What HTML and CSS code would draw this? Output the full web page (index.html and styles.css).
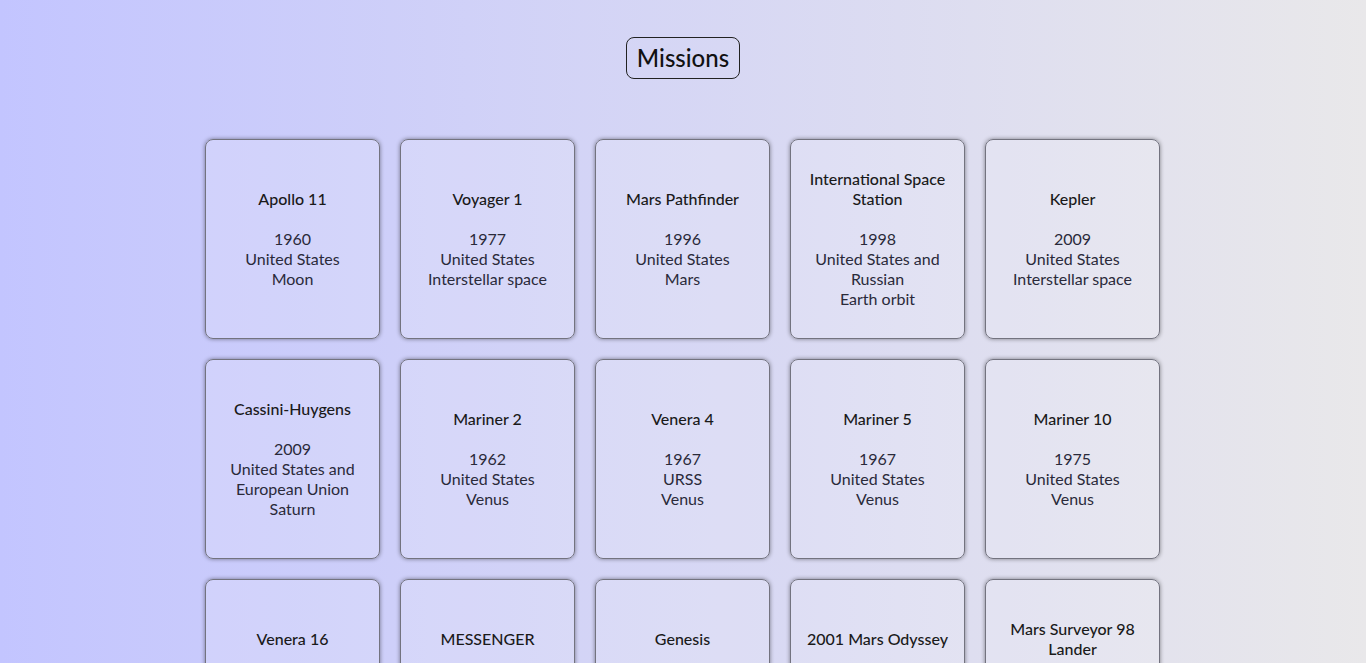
FILE: index.html
```html
<!DOCTYPE html>
<html lang="en">
<head>
<meta charset="utf-8">
<title>Missions</title>
<link rel="stylesheet" href="styles.css">
</head>
<body>
<header class="header"><h1 class="title">Missions</h1></header>
<main class="grid">
  <div class="card"><div class="name">Apollo 11</div><div class="info">1960<br>United States<br>Moon</div></div>
  <div class="card"><div class="name">Voyager 1</div><div class="info">1977<br>United States<br>Interstellar space</div></div>
  <div class="card"><div class="name">Mars Pathfinder</div><div class="info">1996<br>United States<br>Mars</div></div>
  <div class="card"><div class="name">International Space Station</div><div class="info">1998<br>United States and Russian<br>Earth orbit</div></div>
  <div class="card"><div class="name">Kepler</div><div class="info">2009<br>United States<br>Interstellar space</div></div>
  <div class="card"><div class="name">Cassini-Huygens</div><div class="info">2009<br>United States and European Union<br>Saturn</div></div>
  <div class="card"><div class="name">Mariner 2</div><div class="info">1962<br>United States<br>Venus</div></div>
  <div class="card"><div class="name">Venera 4</div><div class="info">1967<br>URSS<br>Venus</div></div>
  <div class="card"><div class="name">Mariner 5</div><div class="info">1967<br>United States<br>Venus</div></div>
  <div class="card"><div class="name">Mariner 10</div><div class="info">1975<br>United States<br>Venus</div></div>
  <div class="card"><div class="name">Venera 16</div><div class="info">1983<br>URSS<br>Venus</div></div>
  <div class="card"><div class="name">MESSENGER</div><div class="info">2004<br>United States<br>Mercury</div></div>
  <div class="card"><div class="name">Genesis</div><div class="info">2001<br>United States<br>Sun</div></div>
  <div class="card"><div class="name">2001 Mars Odyssey</div><div class="info">2001<br>United States<br>Mars</div></div>
  <div class="card"><div class="name">Mars Surveyor 98 Lander</div><div class="info">1999<br>United States<br>Mars</div></div>
</main>
</body>
</html>
```
FILE: styles.css
```css
html, body {
  margin: 0;
  padding: 0;
}
body {
  min-height: 100vh;
  background: linear-gradient(to right, #c3c5ff 0%, #e9e8ea 100%);
  background-attachment: fixed;
  font-family: "Lato", "Open Sans", sans-serif;
  color: #222;
  font-size: 16px;
  line-height: 20px;
}
.header {
  display: flex;
  justify-content: center;
  padding-top: 37px;
}
.title {
  margin: 0;
  font-size: 24px;
  font-weight: 500;
  line-height: 30px;
  padding: 5px 10px 5px;
  border: 1px solid #222;
  border-radius: 8px;
  color: #111;
}
.grid {
  display: grid;
  grid-template-columns: repeat(5, 175px);
  gap: 20px;
  justify-content: center;
  padding-top: 60px;
  padding-right: 1px;
  padding-bottom: 40px;
}
.card {
  box-sizing: border-box;
  height: 200px;
  border: 1px solid #73737f;
  border-radius: 8px;
  background: rgba(255, 255, 255, 0.15);
  box-shadow: 0 0 4px rgba(0, 0, 0, 0.45);
  display: flex;
  flex-direction: column;
  justify-content: center;
  align-items: center;
  text-align: center;
  padding: 0 10px;
}
.name {
  font-weight: 500;
  color: #1a1a1a;
  margin-bottom: 20px;
}
.info {
  color: #2a2a3a;
}
```
